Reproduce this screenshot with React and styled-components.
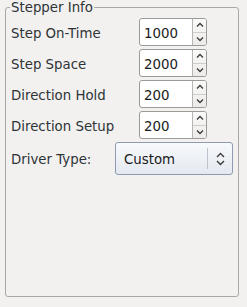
import React from 'react';
import styled, { createGlobalStyle } from 'styled-components';

const Global = createGlobalStyle`
  html, body {
    margin: 0;
    padding: 0;
    background: #f2f1f0;
  }
  body {
    width: 247px;
    height: 307px;
    font-family: "DejaVu Sans", sans-serif;
    font-size: 13.33px;
    color: #2e3436;
  }
`;

const Frame = styled.fieldset`
  margin: 0 8px 0 5px;
  padding: 0 0 0 5px;
  height: 297px;
  box-sizing: border-box;
  border: 1px solid #a9a8a6;
  border-radius: 3px;
`;

const Legend = styled.legend`
  margin-left: -1px;
  padding: 0 1px;
  line-height: 15px;
`;

const Rows = styled.div`
  display: flex;
  flex-direction: column;
  gap: 3px;
  padding-top: 3px;
`;

const Row = styled.div`
  display: flex;
  align-items: center;
`;

const Label = styled.span`
  width: ${p => p.$w}px;
  flex-shrink: 0;
  white-space: nowrap;
  padding-top: 2px;
`;

const Spin = styled.div`
  display: flex;
  width: 68px;
  height: 28px;
  box-sizing: border-box;
  border: 1px solid #9c9a96;
  border-radius: 3px;
  background: #fff;
  overflow: hidden;
`;

const SpinText = styled.div`
  flex: 1;
  padding: 2px 0 0 4px;
  display: flex;
  align-items: center;
  color: #1a1a1a;
`;

const SpinButtons = styled.div`
  width: 13px;
  display: flex;
  flex-direction: column;
  border-left: 1px solid #b8b6b2;
  background: linear-gradient(#fafafa, #ecebe9);
`;

const SpinBtn = styled.div`
  flex: 1;
  display: flex;
  align-items: center;
  justify-content: center;
  & + & {
    border-top: 1px solid #d0cecb;
  }
`;

const Combo = styled.div`
  display: flex;
  align-items: center;
  width: 118px;
  height: 33px;
  box-sizing: border-box;
  border: 1px solid #8e9bb0;
  border-radius: 3px;
  background: linear-gradient(#f7f9fb, #e4e9f0);
`;

const ComboText = styled.div`
  flex: 1;
  padding: 2px 0 0 8px;
  color: #1a1a1a;
`;

const ComboSep = styled.div`
  width: 1px;
  align-self: stretch;
  margin: 5px 0;
  background: #bcc3cd;
`;

const ComboArrow = styled.div`
  width: 24px;
  display: flex;
  justify-content: center;
`;

const Chevron = ({ up }) => (
  <svg width="8" height="6" viewBox="0 0 8 6">
    <path
      d={up ? 'M1 4.5 L4 1.5 L7 4.5' : 'M1 1.5 L4 4.5 L7 1.5'}
      fill="none"
      stroke="#3a3a3a"
      strokeWidth="1.3"
    />
  </svg>
);

const SpinBox = ({ value }) => (
  <Spin>
    <SpinText>{value}</SpinText>
    <SpinButtons>
      <SpinBtn><Chevron up /></SpinBtn>
      <SpinBtn><Chevron /></SpinBtn>
    </SpinButtons>
  </Spin>
);

const rows = [
  ['Step On-Time', '1000'],
  ['Step Space', '2000'],
  ['Direction Hold', '200'],
  ['Direction Setup', '200'],
];

export default function App() {
  return (
    <>
      <Global />
      <Frame>
        <Legend>Stepper Info</Legend>
        <Rows>
          {rows.map(([label, value]) => (
            <Row key={label}>
              <Label $w={128}>{label}</Label>
              <SpinBox value={value} />
            </Row>
          ))}
          <Row>
            <Label $w={104}>Driver Type:</Label>
            <Combo>
              <ComboText>Custom</ComboText>
              <ComboSep />
              <ComboArrow>
                <svg width="9" height="14" viewBox="0 0 9 14">
                  <path d="M1 5 L4.5 1.5 L8 5 M1 9 L4.5 12.5 L8 9" fill="none" stroke="#3a3a3a" strokeWidth="1.4" />
                </svg>
              </ComboArrow>
            </Combo>
          </Row>
        </Rows>
      </Frame>
    </>
  );
}
